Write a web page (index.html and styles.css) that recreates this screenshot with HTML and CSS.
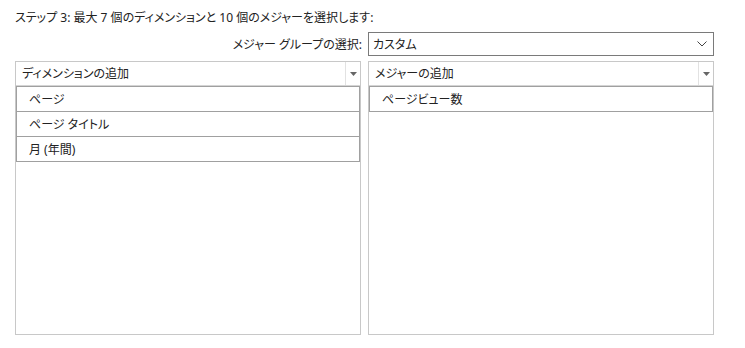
FILE: index.html
```html
<!DOCTYPE html>
<html lang="ja">
<head>
<meta charset="utf-8">
<link rel="stylesheet" href="styles.css">
</head>
<body>
<div class="page">
  <div class="title">ステップ 3: 最大 7 個のディメンションと 10 個のメジャーを選択します:</div>
  <div class="group-row">
    <span class="group-label">メジャー グループの選択:</span>
    <div class="select">
      <span class="select-text">カスタム</span>
      <svg class="chevron" width="10" height="6" viewBox="0 0 10 6"><path d="M0.5 0.5 L5 5 L9.5 0.5" fill="none" stroke="#444" stroke-width="1"/></svg>
    </div>
  </div>
  <div class="panels">
    <div class="panel">
      <div class="panel-head">
        <span class="head-text">ディメンションの追加</span>
        <span class="head-arrow"><svg width="7" height="4" viewBox="0 0 7 4"><path d="M0 0 H7 L3.5 4 Z" fill="#666"/></svg></span>
      </div>
      <div class="list">
        <div class="item">ページ</div>
        <div class="item">ページ タイトル</div>
        <div class="item">月 (年間)</div>
      </div>
    </div>
    <div class="panel">
      <div class="panel-head">
        <span class="head-text">メジャーの追加</span>
        <span class="head-arrow"><svg width="7" height="4" viewBox="0 0 7 4"><path d="M0 0 H7 L3.5 4 Z" fill="#666"/></svg></span>
      </div>
      <div class="list">
        <div class="item">ページビュー数</div>
      </div>
    </div>
  </div>
</div>
</body>
</html>
```
FILE: styles.css
```css
* { box-sizing: border-box; }
html, body { margin: 0; padding: 0; background: #fff; }
body {
  font-family: "Noto Sans", "Noto Sans CJK JP", sans-serif;
  font-size: 12px;
  color: #222;
  font-feature-settings: "palt" 1;
}
.page {
  padding: 8px 0 0 15px;
  width: 714px;
}
.title {
  height: 20px;
  line-height: 20px;
  white-space: nowrap;
}
.group-row {
  margin-top: 4px;
  display: flex;
  justify-content: flex-end;
  align-items: center;
  gap: 6px;
  height: 24px;
}
.group-label { line-height: 25px; white-space: nowrap; }
.select {
  width: 346px;
  height: 24px;
  border: 1px solid #7a7a7a;
  display: flex;
  align-items: center;
  justify-content: space-between;
  padding: 0 6px 0 4px;
}
.select-text { line-height: 23px; }
.chevron { display: block; }
.panels {
  margin-top: 5px;
  display: grid;
  grid-template-columns: 346px 346px;
  column-gap: 7px;
}
.panel {
  height: 274px;
  border: 1px solid #c8c8c8;
}
.panel-head {
  height: 24px;
  border-bottom: 1px solid #d4d4d4;
  display: flex;
  align-items: stretch;
}
.head-text {
  flex: 1;
  line-height: 24px;
  padding-left: 6px;
}
.head-arrow {
  width: 15px;
  border-left: 1px solid #e2e2e2;
  display: flex;
  align-items: center;
  justify-content: center;
}
.head-arrow svg { display: block; }
.item {
  height: 25px;
  line-height: 25px;
  border: 1px solid #a0a0a0;
  border-bottom: none;
  padding-left: 12px;
}
.item:last-child {
  border-bottom: 1px solid #a0a0a0;
  height: 26px;
}
```
